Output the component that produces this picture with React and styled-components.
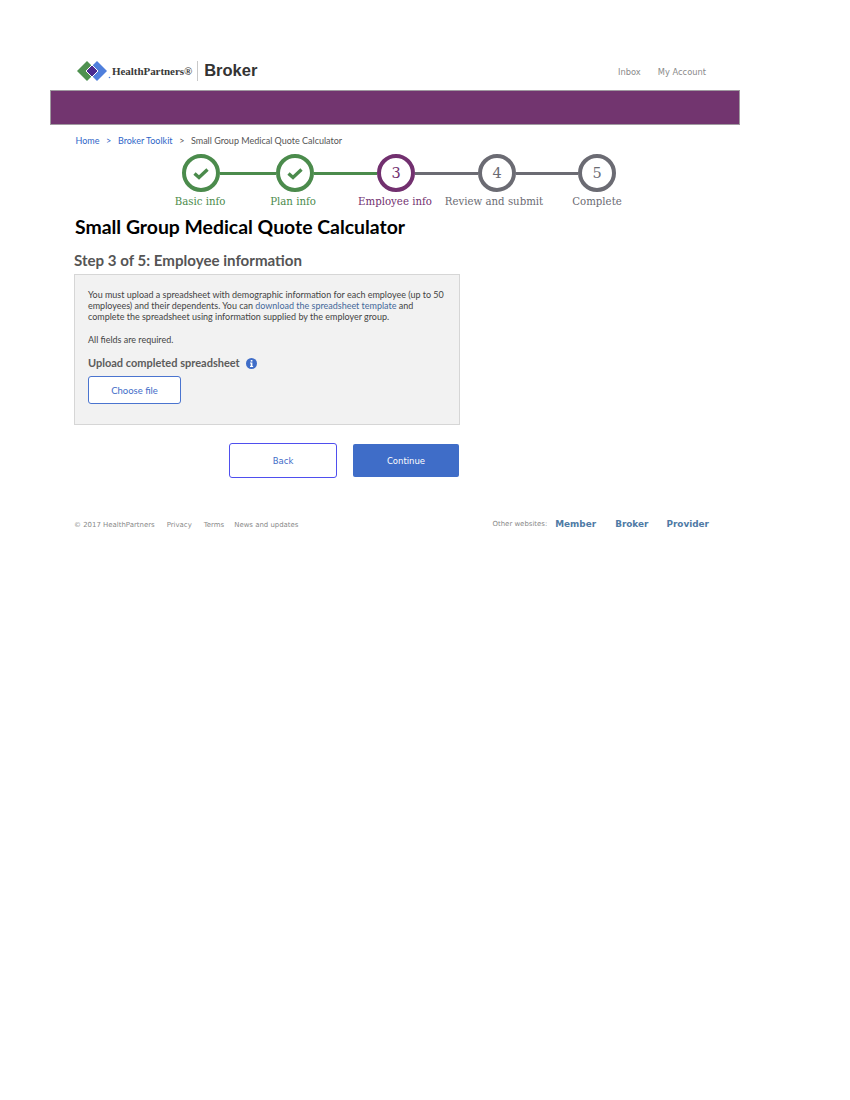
import styled, { createGlobalStyle } from "styled-components";

const GlobalStyle = createGlobalStyle`
  body {
    margin: 0;
    background: #fff;
    font-family: Lato, "Liberation Sans", sans-serif;
  }
`;

const Page = styled.div`
  width: 690px;
  margin-left: 50px;
  padding-top: 60px;
`;

const Header = styled.header`
  display: flex;
  align-items: center;
  justify-content: space-between;
  height: 22px;
  padding: 0 34px 0 25px;
`;

const Brand = styled.div`
  display: flex;
  align-items: center;
`;

const LogoText = styled.span`
  margin-left: 1px;
  font-family: "Liberation Serif", serif;
  font-size: 11px;
  font-weight: bold;
  color: #3a3a3a;
  letter-spacing: -0.05px;
`;

const Divider = styled.span`
  width: 1px;
  height: 20px;
  margin: 0 6px 0 5px;
  background: #c9c9c9;
`;

const Product = styled.span`
  margin-top: -1px;
  font-family: "Liberation Sans", sans-serif;
  font-size: 16.5px;
  font-weight: bold;
  color: #333;
`;

const TopLinks = styled.nav`
  display: flex;
  gap: 17px;
  margin-top: 2px;
`;

const TopLink = styled.a`
  font-family: "DejaVu Sans", sans-serif;
  font-size: 8.3px;
  color: #8a8a8a;
`;

const Banner = styled.div`
  height: 33px;
  margin-top: 8px;
  background: #72356f;
  border: 1px solid #a09aa0;
  box-sizing: content-box;
  width: 688px;
`;

const Breadcrumb = styled.div`
  display: flex;
  align-items: center;
  gap: 6.6px;
  margin: 9px 0 0 25.5px;
  height: 13px;
  font-size: 9px;
  color: #555;
`;

const Crumb = styled.a`
  color: #2f66c8;
`;

const Stepper = styled.div`
  margin-top: 7px;
`;

const Track = styled.div`
  display: flex;
  align-items: center;
  padding-left: 132px;
`;

const Circle = styled.div`
  display: flex;
  align-items: center;
  justify-content: center;
  box-sizing: border-box;
  width: 38px;
  height: 38px;
  border: 4px solid ${({ color }) => color};
  border-radius: 50%;
  font-family: "DejaVu Serif", serif;
  font-size: 14.5px;
  color: ${({ color }) => color};
`;

const Connector = styled.div`
  width: ${({ length }) => length}px;
  height: 3px;
  background: ${({ color }) => color};
`;

const Labels = styled.div`
  display: flex;
  margin: 1px 0 0 110px;
`;

const StepLabel = styled.div`
  width: ${({ width }) => width}px;
  text-align: center;
  font-family: "DejaVu Serif", serif;
  font-size: 10.2px;
  line-height: 17px;
  white-space: nowrap;
  color: ${({ color }) => color};
`;

const Title = styled.h1`
  margin: 4px 0 0 25px;
  font-size: 19.4px;
  line-height: 26px;
  font-weight: 700;
  color: #000;
`;

const Subtitle = styled.h2`
  margin: 11px 0 0 24px;
  font-size: 15.1px;
  line-height: 18px;
  font-weight: 700;
  color: #555;
`;

const Panel = styled.section`
  box-sizing: border-box;
  width: 386px;
  height: 151px;
  margin: 5px 0 0 24px;
  padding: 14px 13px 0;
  background: #f2f2f2;
  border: 1px solid #d6d6d6;
`;

const Copy = styled.p`
  margin: 0 0 12px;
  font-size: 8.97px;
  line-height: 11px;
  color: #444;
`;

const InlineLink = styled.a`
  color: #44689a;
`;

const FieldLabel = styled.div`
  display: flex;
  align-items: center;
  gap: 6px;
  margin-top: -1px;
  font-size: 11px;
  line-height: 14px;
  font-weight: 700;
  color: #5c5c5c;
`;

const ChooseFile = styled.button`
  display: block;
  box-sizing: border-box;
  width: 93px;
  height: 28px;
  margin-top: 6px;
  padding: 0;
  background: #fff;
  border: 1px solid #4a74cf;
  border-radius: 3px;
  font-family: inherit;
  font-size: 9.5px;
  color: #3f6dc8;
`;

const Actions = styled.div`
  display: flex;
  align-items: center;
  gap: 16px;
  margin: 18px 0 0 179px;
`;

const BackButton = styled.button`
  box-sizing: border-box;
  width: 108px;
  height: 35px;
  padding: 0;
  background: #fff;
  border: 1px solid #4f4fee;
  border-radius: 3px;
  font-family: "DejaVu Sans", sans-serif;
  font-size: 8.5px;
  color: #3f6dc8;
`;

const ContinueButton = styled.button`
  box-sizing: border-box;
  width: 106px;
  height: 33px;
  padding: 0;
  background: #3f6dc8;
  border: none;
  border-radius: 2px;
  font-family: "DejaVu Sans", sans-serif;
  font-size: 8.5px;
  color: #fff;
`;

const Footer = styled.footer`
  display: flex;
  align-items: center;
  justify-content: space-between;
  height: 14px;
  margin-top: 39px;
  padding: 0 31px 0 24px;
`;

const FooterGroup = styled.div`
  display: flex;
  align-items: center;
`;

const FooterLinks = styled(FooterGroup)`
  margin-top: 1px;
`;

const FooterText = styled.span`
  margin-right: ${({ after }) => after || 0}px;
  font-family: "DejaVu Sans", sans-serif;
  font-size: 6.95px;
  color: #8a8a8a;
`;

const SiteLink = styled.a`
  margin-left: ${({ before }) => before || 0}px;
  font-family: "DejaVu Sans", sans-serif;
  font-size: 8.9px;
  font-weight: bold;
  color: #4f7aa5;
`;

const Logo = () => (
  <svg width="36" height="22" viewBox="0 0 36 22">
    <path d="M2 11 L12 1 L22 11 L12 21 Z" fill="#4f9150" />
    <path d="M12 11 L22 1 L32 11 L22 21 Z" fill="#4f7fdc" />
    <path d="M17 5 L23 11 L17 17 L11 11 Z" fill="#4a2a8f" stroke="#fff" strokeWidth="1" />
    <circle cx="34.5" cy="17.5" r="0.8" fill="#4f7fdc" />
  </svg>
);

const Check = () => (
  <svg width="16" height="13" viewBox="0 0 16 13">
    <path d="M1.5 6.5 L6 10.5 L14.5 2.5" fill="none" stroke="#4b8b4c" strokeWidth="3.4" />
  </svg>
);

const Info = () => (
  <svg width="11" height="11" viewBox="0 0 11 11">
    <circle cx="5.5" cy="5.5" r="5.5" fill="#3f6dc8" />
    <rect x="4.7" y="2" width="1.7" height="1.6" fill="#fff" />
    <path d="M4 4.6 H6.4 V8 H7.1 V9 H4 V8 H4.7 V5.6 H4 Z" fill="#fff" />
  </svg>
);

const GREEN = "#4b8b4c";
const PURPLE = "#72306f";
const GRAY = "#6b6b73";

const steps = [
  { label: "Basic info", color: GREEN, done: true, cell: 80, line: 56, lineColor: GREEN },
  { label: "Plan info", color: GREEN, done: true, cell: 106, line: 63, lineColor: GREEN },
  { label: "Employee info", color: PURPLE, num: 3, cell: 98, line: 63, lineColor: GRAY },
  { label: "Review and submit", color: GRAY, num: 4, cell: 100, line: 62, lineColor: GRAY },
  { label: "Complete", color: GRAY, num: 5, cell: 106 },
];

export default function App() {
  return (
    <Page>
      <GlobalStyle />
      <Header>
        <Brand>
          <Logo />
          <LogoText>HealthPartners®</LogoText>
          <Divider />
          <Product>Broker</Product>
        </Brand>
        <TopLinks>
          <TopLink>Inbox</TopLink>
          <TopLink>My Account</TopLink>
        </TopLinks>
      </Header>
      <Banner />
      <Breadcrumb>
        <Crumb>Home</Crumb>
        <Crumb>&gt;</Crumb>
        <Crumb>Broker Toolkit</Crumb>
        <span>&gt;</span>
        <span>Small Group Medical Quote Calculator</span>
      </Breadcrumb>
      <Stepper>
        <Track>
          {steps.flatMap((step) => [
            <Circle key={step.label} color={step.color}>
              {step.done ? <Check /> : step.num}
            </Circle>,
            step.line && (
              <Connector key={`${step.label}-line`} length={step.line} color={step.lineColor} />
            ),
          ])}
        </Track>
        <Labels>
          {steps.map((step) => (
            <StepLabel key={step.label} width={step.cell} color={step.color}>
              {step.label}
            </StepLabel>
          ))}
        </Labels>
      </Stepper>
      <Title>Small Group Medical Quote Calculator</Title>
      <Subtitle>Step 3 of 5: Employee information</Subtitle>
      <Panel>
        <Copy>
          You must upload a spreadsheet with demographic information for each employee (up to 50
          employees) and their dependents. You can{" "}
          <InlineLink>download the spreadsheet template</InlineLink> and complete the spreadsheet
          using information supplied by the employer group.
        </Copy>
        <Copy>All fields are required.</Copy>
        <FieldLabel>
          Upload completed spreadsheet
          <Info />
        </FieldLabel>
        <ChooseFile>Choose file</ChooseFile>
      </Panel>
      <Actions>
        <BackButton>Back</BackButton>
        <ContinueButton>Continue</ContinueButton>
      </Actions>
      <Footer>
        <FooterLinks>
          <FooterText after={12}>© 2017 HealthPartners</FooterText>
          <FooterText after={12}>Privacy</FooterText>
          <FooterText after={10}>Terms</FooterText>
          <FooterText>News and updates</FooterText>
        </FooterLinks>
        <FooterGroup>
          <FooterText>Other websites:</FooterText>
          <SiteLink before={8}>Member</SiteLink>
          <SiteLink before={19}>Broker</SiteLink>
          <SiteLink before={18}>Provider</SiteLink>
        </FooterGroup>
      </Footer>
    </Page>
  );
}
